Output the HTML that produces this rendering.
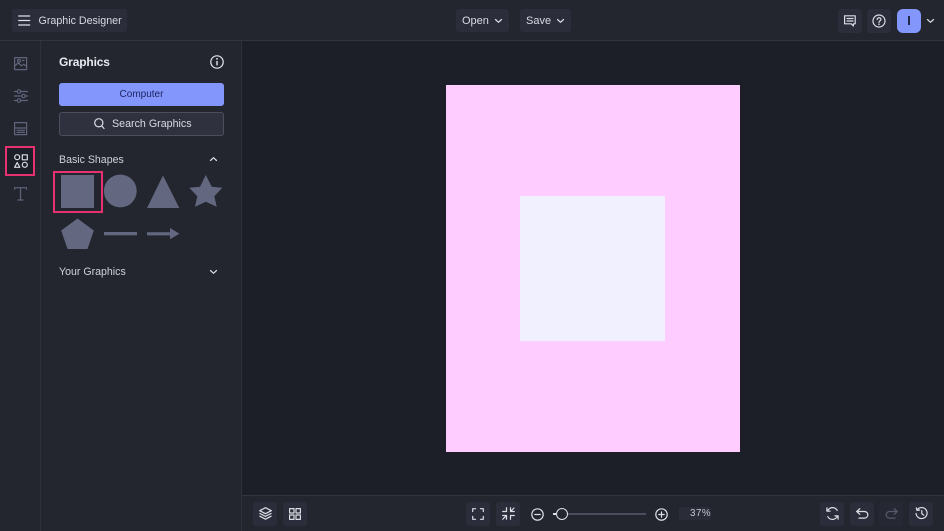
<!DOCTYPE html>
<html><head><meta charset="utf-8">
<style>
*{box-sizing:border-box}
html,body{margin:0;padding:0}
body{width:944px;height:531px;overflow:hidden;position:relative;background:#1c1e28;font-family:"Liberation Sans",sans-serif;color:#e4e6ee}
.a{position:absolute}
.t{position:absolute;white-space:nowrap;line-height:14px}
.b{position:absolute;background:#2b2e3a;border-radius:3px;width:24px;height:24px}
svg{position:absolute;overflow:visible}
.w{fill:none;stroke:#dcdee6;stroke-width:1.2;stroke-linecap:round;stroke-linejoin:round}
.g{fill:none;stroke:#5f647b;stroke-width:1.2;stroke-linecap:round;stroke-linejoin:round}
</style></head><body>
<div class="a" style="left:0;top:0;width:944px;height:41px;background:#23262f;border-bottom:1px solid #32353f"></div>
<div class="a" style="left:0;top:41px;width:242px;height:490px;background:#23262f;border-right:1px solid #2e313b"></div>
<div class="a" style="left:40px;top:41px;width:1px;height:490px;background:#2e313b"></div>
<div class="a" style="left:242px;top:495px;width:702px;height:36px;background:#23262f;border-top:1px solid #32353f"></div>

<!-- top left -->
<div class="a" style="left:12px;top:9px;width:115px;height:23px;background:#2b2e3a;border-radius:3px"></div>
<svg style="left:18px;top:15px" width="12" height="11"><path class="w" d="M.7 1h11M.7 5.5h11M.7 10h11"/></svg>
<div class="t" style="left:38.5px;top:13.5px;font-size:10.7px;color:#d8dae3">Graphic Designer</div>

<!-- top center -->
<div class="a" style="left:456px;top:9px;width:53px;height:23px;background:#2b2e3a;border-radius:3px"></div>
<div class="t" style="left:462px;top:13.5px;font-size:11px;color:#d8dae3">Open</div>
<svg style="left:495px;top:19px" width="7" height="4"><path class="w" d="M.5.5 3.5 3.3 6.5.5"/></svg>
<div class="a" style="left:520px;top:9px;width:51px;height:23px;background:#2b2e3a;border-radius:3px"></div>
<div class="t" style="left:526px;top:13.5px;font-size:11px;color:#d8dae3">Save</div>
<svg style="left:557px;top:19px" width="7" height="4"><path class="w" d="M.5.5 3.5 3.3 6.5.5"/></svg>

<!-- top right -->
<div class="b" style="left:838px;top:8.5px"></div>
<svg style="left:844px;top:14.5px" width="12" height="12"><path class="w" d="M.6.8h10.600v8H9.400V11L7.200 8.800H.6zM3 3.500h6M3 6h6"/></svg>
<div class="b" style="left:867px;top:8.5px"></div>
<svg style="left:872px;top:13.5px" width="14" height="14"><circle class="w" cx="7" cy="7" r="6"/><path class="w" d="M5.200 5.500c0-2.400 3.700-2.300 3.700-.1 0 1.500-1.900 1.500-1.900 3"/><circle cx="7" cy="10.200" r=".8" fill="#dcdee6"/></svg>
<div class="a" style="left:897px;top:8.5px;width:24px;height:24px;border-radius:6px;background:#8296fc"></div>
<div class="a" style="left:908px;top:16px;width:1.500px;height:9px;background:#23284a"></div>
<svg style="left:926.500px;top:19px" width="7" height="4"><path class="w" d="M.5.5 3.500 3.300 6.500.5"/></svg>

<!-- left rail -->
<svg style="left:14px;top:57px" width="13" height="13"><path class="g" d="M.6.6h12v12H.6zM.6 9l3.600-3 3.400 2.800 2.200-1.600 2.800 2M8.500 3.500h1.500"/><circle class="g" cx="5" cy="3.800" r="1.400"/></svg>
<svg style="left:14px;top:89px" width="14" height="14"><path class="g" d="M.5 2.500h13M.5 7h13M.5 11.500h13"/><circle cx="5" cy="2.500" r="1.700" fill="#23262f" stroke="#5f647b" stroke-width="1.200"/><circle cx="9.500" cy="7" r="1.700" fill="#23262f" stroke="#5f647b" stroke-width="1.200"/><circle cx="5" cy="11.500" r="1.700" fill="#23262f" stroke="#5f647b" stroke-width="1.200"/></svg>
<svg style="left:14px;top:122px" width="13" height="13"><path class="g" d="M.6.6h12v12H.6zM.6 6h12M3 8.300h7.500M3 10.400h7.500"/></svg>
<div class="a" style="left:5px;top:146px;width:30px;height:30px;border:2.500px solid #e83270;background:#1c1e28"></div>
<svg style="left:14px;top:154px" width="14" height="14"><circle class="w" cx="3.200" cy="3.200" r="2.500"/><path class="w" d="M8.300.8h5v5h-5zM3.200 8.500.6 13.300h5.200z"/><circle class="w" cx="10.800" cy="10.800" r="2.500"/></svg>
<svg style="left:14px;top:187px" width="13" height="14"><path class="g" d="M.6 2.200V.7h11.800v1.500M6.500.7v12.300M4 13h5"/></svg>

<!-- panel -->
<div class="t" style="left:59px;top:55px;font-size:12px;font-weight:bold;letter-spacing:-.15px;color:#e8eaf0">Graphics</div>
<svg style="left:210px;top:55px" width="14" height="14"><circle class="w" style="stroke:#e8eaf0" cx="7" cy="7" r="6.200"/><path d="M7 6v4.300" stroke="#e8eaf0" stroke-width="1.400" fill="none"/><circle cx="7" cy="3.900" r=".9" fill="#e8eaf0"/></svg>
<div class="a" style="left:59px;top:83px;width:165px;height:23px;background:#8296fc;border-radius:3px"></div>
<div class="t" style="left:59px;top:87.500px;width:165px;text-align:center;font-size:10px;color:#1f2560">Computer</div>
<div class="a" style="left:59px;top:112px;width:165px;height:24px;background:#2f323e;border:1px solid #4a4e5e;border-radius:3px"></div>
<svg style="left:94px;top:118px" width="11" height="12"><circle class="w" cx="4.800" cy="4.800" r="4.100"/><path class="w" d="M7.800 8 10 10.500"/></svg>
<div class="t" style="left:112px;top:117px;font-size:10.700px;color:#d8dae3">Search Graphics</div>

<div class="t" style="left:59px;top:152.500px;font-size:10.600px;color:#cfd1db">Basic Shapes</div>
<svg style="left:210px;top:157px" width="7" height="4"><path class="w" d="M.5 3.500 3.500.7 6.500 3.500"/></svg>

<div class="a" style="left:53px;top:171px;width:50px;height:42px;border:2.500px solid #e83270"></div>
<svg style="left:0;top:0" width="944" height="531">
<rect x="61" y="175" width="33" height="33" fill="#636880"/>
<circle cx="120.300" cy="191" r="16.400" fill="#636880"/>
<path d="M163 175.500 179.300 208H147z" fill="#636880"/>
<path d="M205.800 175 211.700 186.700 222.300 187.700 214.300 196.200 216.700 206.800 205.800 201.700 195 206.800 197.300 196.200 189.300 187.700 200 186.700z" fill="#636880"/>
<path d="M77.500 218.500 93.800 230.500 87.500 249H67.500L61.200 230.500z" fill="#636880"/>
<rect x="104" y="232" width="33" height="3.300" fill="#636880"/>
<path d="M147 232.200H170V228L179.500 233.700 170 239.300V235.400H147z" fill="#636880"/>
</svg>

<div class="t" style="left:59px;top:264.500px;font-size:10.600px;color:#cfd1db">Your Graphics</div>
<svg style="left:210px;top:270px" width="7" height="4"><path class="w" d="M.5.5 3.500 3.300 6.500.5"/></svg>

<!-- canvas -->
<div class="a" style="left:446px;top:85px;width:294px;height:367px;background:#ffccff"></div>
<div class="a" style="left:520px;top:196px;width:145px;height:145px;background:#f0f0fe"></div>

<!-- bottom left -->
<div class="b" style="left:253px;top:501.500px"></div>
<svg style="left:259px;top:507px" width="13" height="13"><path class="w" d="M6.500.7 12.300 3.700 6.500 6.700.7 3.700zM.9 6.500 6.500 9.300 12.100 6.500M.9 9.200 6.500 12.200 12.100 9.200"/></svg>
<div class="b" style="left:283px;top:501.500px"></div>
<svg style="left:289px;top:507.500px" width="12" height="12"><path class="w" d="M.6.6h4.400v4.400H.6zM7 .6h4.400v4.400H7zM.6 7h4.400v4.400H.6zM7 7h4.400v4.400H7z"/></svg>

<!-- bottom center -->
<div class="b" style="left:466px;top:501.500px"></div>
<svg style="left:472px;top:507.500px" width="12" height="12"><path class="w" d="M.7 3.500V.7h2.800M8.500.7h2.800v2.800M.7 8.500v2.800h2.800M8.500 11.300h2.800V8.500"/></svg>
<div class="b" style="left:496px;top:501.500px"></div>
<svg style="left:501.500px;top:507px" width="13" height="13"><path class="w" d="M.7 4.500h3.800V.7M8.500.7v3.800h3.800M.7 8.500h3.800v3.800M8.500 12.300V8.500h3.800M8.700 4.300 12 1M.8 12.200 4.300 8.700"/></svg>
<svg style="left:530.500px;top:507.500px" width="13" height="13"><circle class="w" cx="6.500" cy="6.500" r="5.700"/><path class="w" d="M3.800 6.500h5.400"/></svg>
<div class="a" style="left:553px;top:513px;width:93px;height:1.500px;background:#4a4e5e"></div>
<div class="a" style="left:553px;top:513px;width:5px;height:1.500px;background:#dcdee6"></div>
<div class="a" style="left:556px;top:508px;width:12px;height:12px;border-radius:50%;background:#23262f;border:1.500px solid #dcdee6"></div>
<svg style="left:654.500px;top:507.500px" width="13" height="13"><circle class="w" cx="6.500" cy="6.500" r="5.700"/><path class="w" d="M3.800 6.500h5.400M6.500 3.800v5.400"/></svg>
<div class="a" style="left:679px;top:507px;width:32px;height:13px;background:#2a2d38;border-radius:2px"></div>
<div class="t" style="left:690px;top:507px;font-size:9.800px;letter-spacing:.5px;color:#c5c8d3">37%</div>

<!-- bottom right -->
<div class="b" style="left:820px;top:501.500px"></div>
<svg style="left:825.500px;top:507px" width="13" height="13"><path class="w" d="M11.200 3.400A5.300 5.300 0 0 0 2.300 2.700L.9 4.100M.9.900v3.200h3.200M1.800 9.600A5.300 5.300 0 0 0 10.700 10.300L12.100 8.900M12.100 12.100V8.900H8.900"/></svg>
<div class="b" style="left:850px;top:501.500px"></div>
<svg style="left:855.500px;top:508px" width="13" height="11"><path class="w" d="M3.800.7.700 3.500 3.800 6.300M.8 3.500H8.500a3.300 3.300 0 0 1 0 6.600H3"/></svg>
<div class="a" style="left:879px;top:501.500px;width:24px;height:24px;border-radius:3px;background:#262933"></div>
<svg style="left:884.500px;top:508px" width="13" height="11"><path d="M9.200.7 12.300 3.500 9.200 6.300M12.200 3.500H4.500a3.300 3.300 0 0 0 0 6.600H10" fill="none" stroke="#565a6b" stroke-width="1.200" stroke-linecap="round" stroke-linejoin="round"/></svg>
<div class="b" style="left:909px;top:501.500px"></div>
<svg style="left:914.500px;top:507px" width="13" height="13"><path class="w" d="M2.300 2.600A5.500 5.500 0 1 1 1.100 6.500M1.300.9 2 3.400 4.600 3M6.800 3.600v3.200l2 1.300"/></svg>
</body></html>
